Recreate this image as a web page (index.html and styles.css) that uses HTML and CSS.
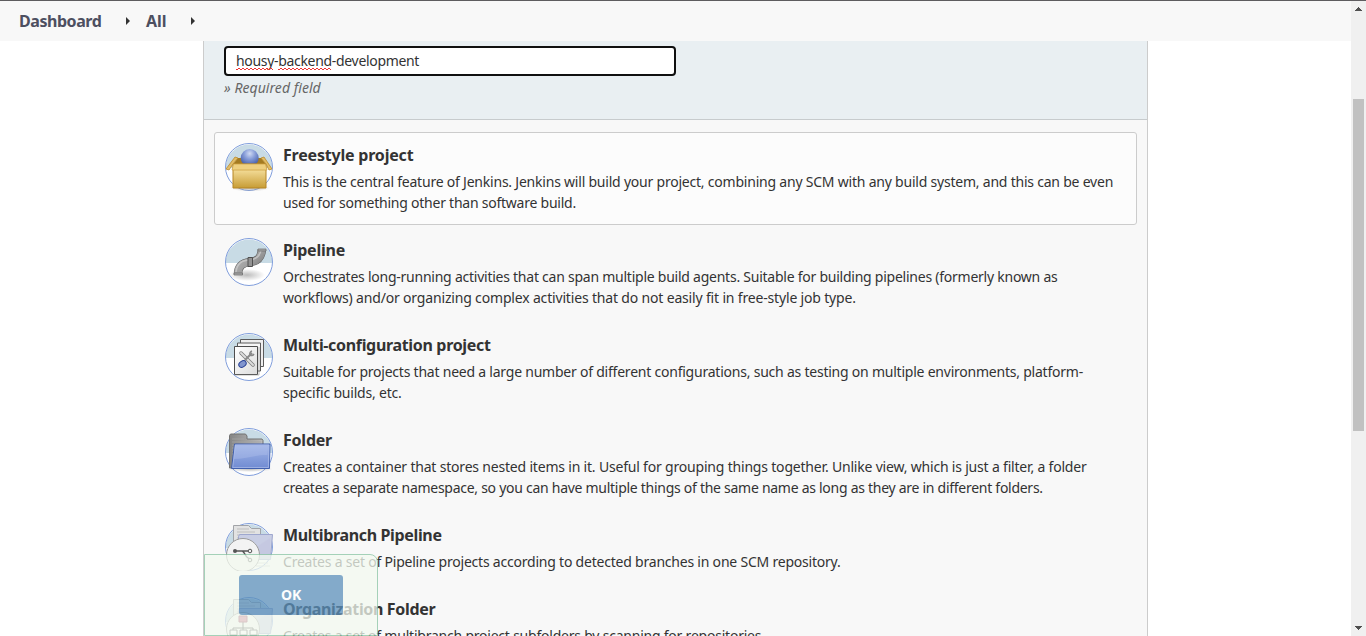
FILE: index.html
```html
<!DOCTYPE html>
<html lang="en">
<head>
<meta charset="utf-8">
<title>New Item [Jenkins]</title>
<link rel="stylesheet" href="styles.css">
</head>
<body>
<svg class="defs" width="0" height="0">
  <defs>
    <linearGradient id="gold" x1="0" y1="0" x2="0" y2="1"><stop offset="0" stop-color="#d9b057"/><stop offset=".3" stop-color="#f0d790"/><stop offset="1" stop-color="#c79c35"/></linearGradient>
    <radialGradient id="ball" cx=".5" cy=".25" r=".7"><stop offset="0" stop-color="#d0daf3"/><stop offset=".45" stop-color="#869cd8"/><stop offset="1" stop-color="#4259a4"/></radialGradient>
    <linearGradient id="steel" x1="0" y1="0" x2="1" y2="1"><stop offset="0" stop-color="#bcbcbc"/><stop offset=".5" stop-color="#a0a0a0"/><stop offset="1" stop-color="#707070"/></linearGradient>
    <linearGradient id="paper" x1="0" y1="0" x2="1" y2="1"><stop offset="0" stop-color="#fff"/><stop offset="1" stop-color="#dcdcdc"/></linearGradient>
    <linearGradient id="blue" x1="0" y1="0" x2="0" y2="1"><stop offset="0" stop-color="#a3b7e8"/><stop offset="1" stop-color="#708bd2"/></linearGradient>
    <linearGradient id="grey" x1="0" y1="0" x2="1" y2="0"><stop offset="0" stop-color="#858585"/><stop offset="1" stop-color="#bbb"/></linearGradient>
    <radialGradient id="shade"><stop offset="0" stop-color="#999" stop-opacity=".65"/><stop offset="1" stop-color="#999" stop-opacity="0"/></radialGradient>
    <g id="disc"><circle cx="24" cy="24" r="23.4" fill="#fff"/><path d="M.6 25a23.4 23.4 0 1 1 46.8 0z" fill="#c8dbe5"/><circle cx="24" cy="24" r="23.5" fill="none" stroke="#809edc"/></g>
    <g id="branchfolder">
      <use href="#disc"/>
      <path d="M8.5 2.500h15l3 3h9v30h-27z" fill="#e2e2e2" stroke="#a2a4a8"/>
      <path d="M12 6h12m-12 3h18m-18 3h18m-18 3h18m-18 3h18" stroke="#bebebe"/>
      <path d="M13.500 13.500l1-2h33l-2 25h-32z" fill="#c9cee4" stroke="#9ea7ce"/>
      <path d="M15 35l30-20v21H15z" fill="#c3c5df" opacity=".6"/>
      <path d="M30 40h13m-12 3h14" stroke="#ccc"/>
      <circle cx="18" cy="32" r="16.500" fill="#f3f3f3" stroke="#9b9b9b"/>
    </g>
  </defs>
</svg>
<header class="crumbs">
  <span class="crumb">Dashboard</span><i class="caret first"></i><span class="crumb all">All</span><i class="caret last"></i>
</header>
<div class="page">
  <main class="panel">
    <section class="name-area">
      <div class="name-input"><span class="misspelled">housy<svg class="wave" width="38" height="3"><path d="M0 1l1 1 2-2 2 2 2-2 2 2 2-2 2 2 2-2 2 2 2-2 2 2 2-2 2 2 2-2 2 2 2-2 2 2 2-2 2 2"/></svg></span>-<span class="misspelled">backend<svg class="wave long" width="53" height="3"><path d="M0 1l1 1 2-2 2 2 2-2 2 2 2-2 2 2 2-2 2 2 2-2 2 2 2-2 2 2 2-2 2 2 2-2 2 2 2-2 2 2 2-2 2 2 2-2 2 2 2-2 2 2 2-2 2 2"/></svg></span>-development</div>
      <div class="hint">» Required field</div>
    </section>
    <ul class="items">
      <li class="item active">
        <svg class="icon" viewBox="0 0 48 48"><use href="#disc"/><ellipse cx="25" cy="45" rx="20" ry="3.500" fill="url(#shade)"/><path d="M8 21l5-6h23l5 6z" fill="#a47b22"/><circle cx="24.700" cy="15" r="9" fill="url(#ball)"/><path d="M8 21h33v24H8z" fill="url(#gold)" stroke="#b68525"/><path d="M8 21l5-6-3-1-9 12 3 1zM41 21l-5-6 3-1 8 12-3 1z" fill="#e3bd67" stroke="#b98a2c" stroke-width=".8"/><path d="M8.500 21h32l1.500 6H7z" fill="#efd080" stroke="#cda043" stroke-width=".7"/></svg>
        <div class="copy"><h2 class="title"><span class="w1">Freestyle project</span></h2><p><span class="a1">This is the central feature of Jenkins. Jenkins will build your project, combining any SCM with any build system, and this can be even</span><br><span class="a2">used for something other than software build.</span></p></div>
      </li>
      <li class="item">
        <svg class="icon" viewBox="0 0 48 48"><use href="#disc"/><ellipse cx="22" cy="37" rx="18" ry="6" fill="url(#shade)"/><path d="M13 36.500C13 28 17 25 25 24C33 23.500 36 20 37 11.500" fill="none" stroke="#5c5c5c" stroke-width="8.500"/><path d="M13 36C13 28 17 25 25 24C33 23.500 36 20 37 12" fill="none" stroke="url(#steel)" stroke-width="7.500"/><path d="M11 34c1-9 6-12 14-12 7-1 10-4 11-10" fill="none" stroke="#d0d0d0" stroke-width="1.500" opacity=".7"/><path d="M23 19.500h4.500v9H23z" fill="#929292" stroke="#505050"/><path d="M9 35h8.500v2H9zM33 11h8v2h-8z" fill="#aaa" stroke="#686868" stroke-width=".7"/></svg>
        <div class="copy"><h2 class="title"><span class="w2">Pipeline</span></h2><p><span class="b1">Orchestrates long-running activities that can span multiple build agents. Suitable for building pipelines (formerly known as</span><br><span class="b2">workflows) and/or organizing complex activities that do not easily fit in free-style job type.</span></p></div>
      </li>
      <li class="item">
        <svg class="icon" viewBox="0 0 48 48"><use href="#disc"/><path d="M15.500 6.500h23v27h-23z" fill="#eee" stroke="#5b5b5b"/><path d="M12.500 10h23v28h-23z" fill="#f5f5f5" stroke="#5b5b5b"/><path d="M9.500 13.500h23v28h-23z" fill="url(#paper)" stroke="#4d4d4d"/><path d="M10 42h24V14" fill="none" stroke="#888" opacity=".55"/><path d="M16 20l12 12" stroke="#7d7d7d" stroke-width="3.500" stroke-linecap="round"/><path d="M16 20l12 12" stroke="#ddd" stroke-width="2" stroke-linecap="round"/><path d="M27 20l-7 7" stroke="#888" stroke-width="2"/><path d="M27 18a3 3 0 0 0-2 4 3 3 0 0 0 4-1" fill="none" stroke="#888" stroke-width="1.500"/><ellipse cx="17.500" cy="31" rx="4" ry="2.800" transform="rotate(-35 17.500 31)" fill="#8195ce" stroke="#263f95"/></svg>
        <div class="copy"><h2 class="title"><span class="w3">Multi-configuration project</span></h2><p><span class="c1">Suitable for projects that need a large number of different configurations, such as testing on multiple environments, platform-</span><br><span class="c2">specific builds, etc.</span></p></div>
      </li>
      <li class="item">
        <svg class="icon" viewBox="0 0 48 48"><use href="#disc"/><ellipse cx="25" cy="41" rx="23" ry="3" fill="url(#shade)"/><path d="M4.500 40V7.500l1-1.500h15l1.500 2v3h15l1 1.500V40z" fill="url(#grey)" stroke="#727272"/><path d="M7 11h12m-12 3h29m-29 3h29m-29 3h29m-29 3h29m-29 3h29" stroke="#a4a4a4" stroke-width=".8"/><path d="M9.500 16h35.500l-.5 24.500H6.500z" fill="url(#blue)" stroke="#405fad"/><path d="M10.300 17h33.600l-.5 22.500H7.700z" fill="none" stroke="#b6c5ec" stroke-width=".6"/><path d="M10 18h33l-.5 9C29 27 20 31 9 31z" fill="#b8c7ef" opacity=".35"/></svg>
        <div class="copy"><h2 class="title"><span class="w4">Folder</span></h2><p><span class="d1">Creates a container that stores nested items in it. Useful for grouping things together. Unlike view, which is just a filter, a folder</span><br><span class="d2">creates a separate namespace, so you can have multiple things of the same name as long as they are in different folders.</span></p></div>
      </li>
      <li class="item">
        <svg class="icon" viewBox="0 0 48 48"><use href="#branchfolder"/><path d="M10 28h15M17 28c3 0 3 8 9 8" fill="none" stroke="#555" stroke-width="1.500"/><circle cx="10" cy="28" r="2" fill="#555"/><circle cx="25" cy="28" r="1.800" fill="#eee" stroke="#555"/><circle cx="25" cy="37" r="1.800" fill="#eee" stroke="#555"/></svg>
        <div class="copy"><h2 class="title"><span class="w5">Multibranch Pipeline</span></h2><p><span class="e1">Creates a set of Pipeline projects according to detected branches in one SCM repository.</span></p></div>
      </li>
      <li class="item">
        <svg class="icon" viewBox="0 0 48 48"><use href="#branchfolder"/><path d="M18 25v5M8 34v-3h20v3M18 30v4" fill="none" stroke="#444"/><path d="M14 19h8v6h-8z" fill="#c86480" stroke="#8e3752"/><path d="M5 33h7v5H5zM15 33h7v5h-7zM25 33h7v5h-7z" fill="#fff" stroke="#555"/></svg>
        <div class="copy"><h2 class="title"><span class="w6">Organization Folder</span></h2><p><span class="f1">Creates a set of multibranch project subfolders by scanning for repositories.</span></p></div>
      </li>
    </ul>
    <div class="footer"><button class="ok">OK</button></div>
  </main>
</div>
<aside class="scrollbar">
  <svg width="7" height="4" shape-rendering="crispEdges"><path d="M0 4V3h1V2h1V1h1V0h1v1h1v1h1v1h1v1z"/></svg>
  <div class="thumb"></div>
  <svg class="down" width="7" height="4" shape-rendering="crispEdges"><path d="M0 0h7v1H6v1H5v1H4v1H3V3H2V2H1V1H0z"/></svg>
</aside>
</body>
</html>
```
FILE: styles.css
```css
* { box-sizing: border-box; }
body {
  margin: 0;
  width: 1366px;
  height: 636px;
  overflow: hidden;
  display: grid;
  grid-template: 40px 1fr / 1351px 15px;
  border-top: 1px solid #5e5c5f;
  background: #fff;
  color: #333;
  font: 14px/21px "Noto Sans", sans-serif;
}
.defs { position: absolute; }
.crumbs {
  grid-area: 1 / 1;
  display: flex;
  align-items: center;
  padding-left: 19px;
  background: #f8f8f8;
  color: #4d4f60;
  font-weight: 700;
  font-size: 16px;
}
.crumb { width: 83px; white-space: nowrap; letter-spacing: -.45px; }
.crumb.all { width: 22px; letter-spacing: 0; }
.caret { border: 4px solid transparent; border-left-color: #333; border-right: 0; }
.caret.first { margin: 0 16px 0 24px; }
.caret.last { margin-left: 23px; }
.page { grid-area: 2 / 1; overflow: hidden; padding-left: 203px; }
.panel {
  position: relative;
  width: 945px;
  height: 595px;
  overflow: hidden;
  border: solid #ccc;
  border-width: 0 1px;
  background: #f8f8f8;
}
.name-area { height: 79px; padding: 5px 20px 0; background: #e9eff2; border-bottom: 1px solid #c7cbcd; }
.name-input {
  width: 452px;
  height: 30px;
  padding: 2px 10px;
  border: 2px solid #101010;
  border-radius: 4px;
  background: #fff;
  letter-spacing: -.32px;
}
.misspelled { position: relative; }
.wave { position: absolute; left: 0; bottom: -1px; fill: none; stroke: #e33; stroke-width: 1; }
.hint { margin-top: 1px; color: #666; font-style: italic; letter-spacing: .05px; }
.items { margin: 0; padding: 12px 10px; list-style: none; }
.item { display: flex; gap: 10px; width: 923px; padding: 10px; margin-bottom: 2px; border: 1px solid transparent; border-radius: 3px; }
.item.active { border-color: #ccc; background: #fcfcfc; }
.icon { flex: none; width: 48px; height: 48px; }
.copy { white-space: nowrap; }
.title { margin: 0; padding-top: 1px; height: 28px; font-size: 16px; line-height: 22px; font-weight: 700; }
.copy p { margin: 0; padding-bottom: 1px; }

/* tracking per line of copy */
.w1 { letter-spacing: -.2px; }
.w2 { letter-spacing: -.24px; }
.w3 { letter-spacing: -.33px; }
.w4 { letter-spacing: -.22px; }
.w5 { letter-spacing: -.35px; }
.w6 { letter-spacing: -.34px; }
.a1 { letter-spacing: -.216px; }
.a2 { letter-spacing: -.24px; }
.b1 { letter-spacing: -.244px; }
.b2 { letter-spacing: -.17px; }
.c1 { letter-spacing: -.225px; }
.c2 { letter-spacing: -.21px; }
.d1 { letter-spacing: -.192px; }
.d2 { letter-spacing: -.275px; }
.e1 { letter-spacing: -.214px; }
.f1 { letter-spacing: -.22px; }

.footer {
  position: absolute;
  left: 0;
  bottom: 0;
  width: 174px;
  height: 82px;
  padding: 20px 34px;
  border: 1px solid #89c5a3;
  border-radius: 0 8px 0 0;
  background: #f3faf0;
  opacity: .75;
}
.ok { width: 104px; height: 40px; padding: 0 0 2px; border: 0; border-radius: 3px; background: #5c91bb; color: #fff; font: 700 14px "Noto Sans", sans-serif; letter-spacing: -.3px; }
.scrollbar { grid-area: 1 / 2 / 3 / 3; display: flex; flex-direction: column; align-items: center; padding-top: 6px; background: #f0f0f0; }
.scrollbar svg { fill: #505050; }
.thumb { width: 11px; height: 332px; margin-top: 88px; margin-right: 1px; background: #c1c1c1; }
.down { margin-top: 195px; }
```
